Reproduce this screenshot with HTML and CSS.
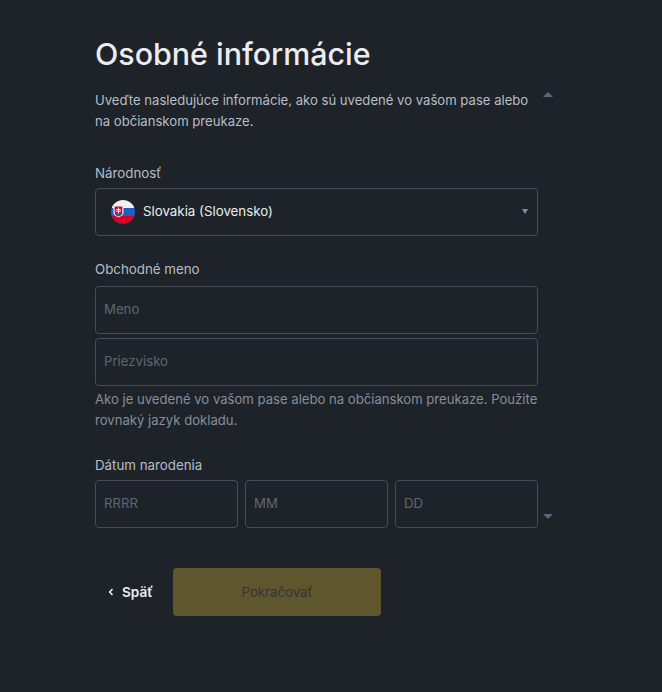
FILE: index.html
```html
<!DOCTYPE html>
<html lang="sk">

<head>
  <meta charset="UTF-8">
  <meta name="viewport" content="width=device-width, initial-scale=1.0">
  <title>Osobné informácie</title>
  <link rel="stylesheet" href="styles.css">
</head>

<body>
  <main class="page">
    <div class="form-col">
      <h1 class="title">Osobné informácie</h1>
      <p class="intro">Uveďte nasledujúce informácie, ako sú uvedené vo vašom pase alebo na občianskom preukaze.</p>

      <section class="field field-country">
        <div class="label">Národnosť</div>
        <div class="box select">
          <svg class="flag" width="24" height="24" viewBox="0 0 24 24">
            <defs>
              <clipPath id="flag-circle"><circle cx="12" cy="12" r="12"/></clipPath>
            </defs>
            <g clip-path="url(#flag-circle)">
              <rect width="24" height="8" fill="#f0f0f0"/>
              <rect y="8" width="24" height="8" fill="#1f5fc4"/>
              <rect y="16" width="24" height="8" fill="#d80027"/>
            </g>
            <g transform="translate(-.5 .8) scale(1 .86)">
              <path d="M3 5.500h10v8.500c0 2.800-2.400 4.200-5 5.500-2.600-1.300-5-2.700-5-5.500z" fill="#f0f0f0"/>
              <path d="M4.200 6.700h7.600v7.300c0 2.100-1.900 3.200-3.800 4.200-1.900-1-3.800-2.100-3.800-4.200z" fill="#d80027"/>
              <path d="M7.500 8h1v1.600h1.800v1H8.500v1.100h2.200v1H8.500V15h-1v-2.300H5.300v-1h2.200v-1.100H5.700v-1h1.800z" fill="#f0f0f0"/>
              <path d="M4.800 15.800c.8-1 1.600-1 2.200-.4.500-.6 1.500-.6 2 0 .6-.6 1.400-.6 2.200.4-.7 1-1.900 1.700-3.200 2.400-1.300-.7-2.500-1.400-3.200-2.400z" fill="#1f5fc4"/>
            </g>
          </svg>
          <span class="select-value">Slovakia (Slovensko)</span>
          <span class="select-caret"></span>
        </div>
      </section>

      <section class="field field-name">
        <div class="label">Obchodné meno</div>
        <div class="name-stack">
          <input class="box input" type="text" placeholder="Meno">
          <input class="box input" type="text" placeholder="Priezvisko">
        </div>
        <p class="hint">Ako je uvedené vo vašom pase alebo na občianskom preukaze. Použite rovnaký jazyk dokladu.</p>
      </section>

      <section class="field field-date">
        <div class="label">Dátum narodenia</div>
        <div class="date-row">
          <input class="box input" type="text" placeholder="RRRR">
          <input class="box input" type="text" placeholder="MM">
          <input class="box input" type="text" placeholder="DD">
        </div>
      </section>

      <div class="actions">
        <button type="button" class="btn-back">
          <svg width="6" height="8" viewBox="0 0 6 8"><path d="M4.500 1 1.700 4l2.800 3" fill="none" stroke="#eaecef" stroke-width="1.600"/></svg>
          Späť
        </button>
        <button type="button" class="btn-next">Pokračovať</button>
      </div>

      <!-- scroll arrows next to the form -->
      <span class="scroll-arrow scroll-up"></span>
      <span class="scroll-arrow scroll-down"></span>
    </div>
  </main>
</body>

</html>
```

FILE: styles.css
```css
* {
  box-sizing: border-box;
}

body {
  margin: 0;
  min-height: 692px;
  background-color: #1e2329;
  color: #eaecef;
  font-family: Inter, "Noto Sans", "Liberation Sans", sans-serif;
  overflow: hidden;
}

.page {
  padding: 32px 0 0 95px;
}

.form-col {
  position: relative;
  width: 443px;
}

.title {
  margin: 0;
  font-size: 30.4px;
  line-height: 44px;
  font-weight: 500;
  color: #eaecef;
}

.intro {
  margin: 14px 0 0;
  font-size: 13.12px;
  line-height: 21px;
  color: #b7bdc6;
}

.field {
  margin-top: 31px;
}

.field-name {
  margin-top: 23px;
}

.field-date {
  margin-top: 24px;
}

.label {
  font-size: 13.3px;
  line-height: 20px;
  color: #b7bdc6;
  margin-bottom: 5px;
}

.field-name .label {
  margin-bottom: 7px;
}

.box {
  display: block;
  width: 100%;
  height: 48px;
  background: transparent;
  border: 1px solid #474d57;
  border-radius: 4px;
}

.select {
  display: flex;
  align-items: center;
  padding: 0 9px 0 15px;
}

.flag {
  flex: none;
  margin-right: 8px;
}

.select-value {
  flex: 1;
  font-size: 13.3px;
  font-weight: 400;
  color: #eaecef;
  padding-bottom: 2px;
}

.select-caret {
  width: 0;
  height: 0;
  margin-left: 4px;
  margin-bottom: 1px;
  border-left: 3.500px solid transparent;
  border-right: 3.500px solid transparent;
  border-top: 5px solid #848e9c;
}

.input {
  padding: 0 8px 2px;
  font-family: inherit;
  font-size: 13.2px;
  color: #eaecef;
  outline: none;
}

.input::placeholder {
  color: #5e6673;
  opacity: 1;
}

.name-stack {
  display: flex;
  flex-direction: column;
  gap: 4px;
}

.hint {
  margin: 3px 0 0;
  font-size: 13.12px;
  line-height: 21px;
  color: #848e9c;
}

.date-row {
  display: grid;
  grid-template-columns: repeat(3, 1fr);
  gap: 7px;
}

.actions {
  display: flex;
  align-items: center;
  margin-top: 40px;
}

.btn-back {
  display: flex;
  align-items: center;
  gap: 8px;
  width: 78px;
  height: 48px;
  padding: 0 0 0 13px;
  background: none;
  border: none;
  font-family: inherit;
  font-size: 13.6px;
  font-weight: 600;
  color: #eaecef;
}

.btn-next {
  width: 208px;
  height: 48px;
  background-color: #5f562e;
  border: none;
  border-radius: 4px;
  font-family: inherit;
  font-size: 13.2px;
  font-weight: 400;
  color: #33353a;
}

.scroll-arrow {
  position: absolute;
  left: 448px;
  width: 0;
  height: 0;
  border-left: 5px solid transparent;
  border-right: 5px solid transparent;
}

.scroll-up {
  top: 60px;
  border-bottom: 5px solid #5e6673;
}

.scroll-down {
  top: 482px;
  border-top: 5px solid #5e6673;
}
```
